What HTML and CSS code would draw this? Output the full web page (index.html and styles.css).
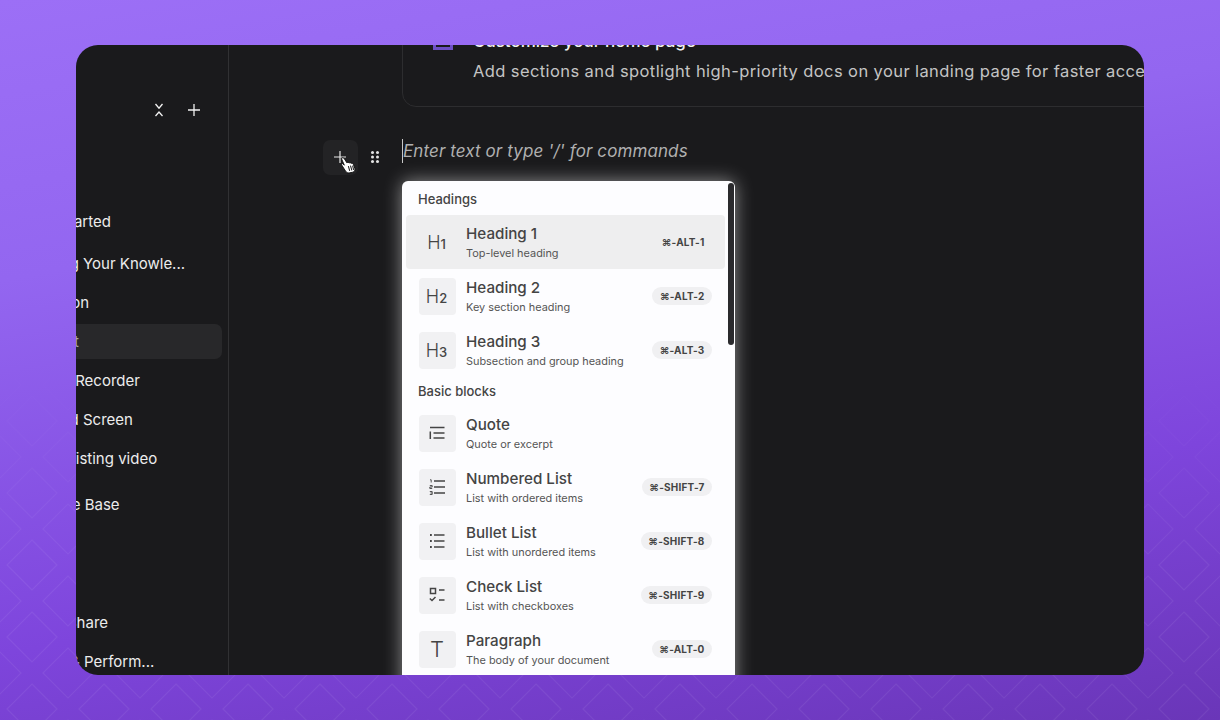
FILE: index.html

```html
<!DOCTYPE html>
<html lang="en">
<head>
  <meta charset="UTF-8" />
  <title>Docs editor</title>
  <link rel="stylesheet" href="styles.css">
</head>
<body>
  <svg class="pattern" width="1220" height="720" aria-hidden="true">
    <defs>
      <pattern id="diamonds" width="72" height="72" patternUnits="userSpaceOnUse" x="-4" y="25">
        <path d="M36 11 61 36 36 61 11 36Z M-25 0 0-25 25 0 0 25Z M47 0 72-25 97 0 72 25Z M-25 72 0 47 25 72 0 97Z M47 72 72 47 97 72 72 97Z" fill="none" stroke="#fff" stroke-width="1.200"/>
      </pattern>
    </defs>
    <rect width="1220" height="720" fill="url(#diamonds)"/>
  </svg>

  <div class="window">
    <aside class="sidebar">
      <div class="side-tools">
        <svg width="16" height="16" viewBox="0 0 16 16"><path d="M4.500 2 8 6.200 11.500 2M4.500 14 8 10 11.500 14" fill="none" stroke="#f2f2f2" stroke-width="1.300"/></svg>
        <svg width="16" height="16" viewBox="0 0 16 16"><path d="M8 2v12M2 8h12" fill="none" stroke="#f2f2f2" stroke-width="1.300"/></svg>
      </div>
      <nav class="nav">
        <div class="nav-item in-started">Getting Started</div>
        <div class="nav-item in-building tall">Building Your Knowle...</div>
        <div class="nav-item in-intro">Introduction</div>
        <div class="nav-item in-doc active">Document</div>
        <div class="nav-item in-recorder">Screen Recorder</div>
        <div class="nav-item in-screen">Upload Screen</div>
        <div class="nav-item in-video">From existing video</div>
        <div class="nav-item in-base group">Knowledge Base</div>
        <div class="nav-item in-share far">Share</div>
        <div class="nav-item in-perform">Analytics &amp; Perform...</div>
      </nav>
    </aside>

    <main class="content">
      <section class="card">
        <div class="card-mark"></div>
        <div class="card-text">
          <div class="card-title">Customize your home page</div>
          <div class="card-desc">Add sections and spotlight high-priority docs on your landing page for faster access</div>
        </div>
      </section>

      <div class="editor-line">
        <div class="block-tools">
          <div class="add-btn">
            <svg class="plus" width="14" height="14" viewBox="0 0 14 14"><path d="M7 1v12M1 7h12" fill="none" stroke="#e8e8e8" stroke-width="1.200"/></svg>
            <svg class="hand" width="17" height="18" viewBox="0 0 16 17"><path d="M2.300 2.500C3 1.300 4.300 1.400 5 2.600L7.500 6.500C8 5.800 9 5.900 9.500 6.700 10 6 11 6.200 11.500 7 12 6.600 13 6.800 13.500 7.800L15 12C15.300 13.500 14.500 15 13 15.300L9.500 16C8 16.200 7 15.500 6.200 14.300L2.500 8.500C2 7.600 2.800 7 3.600 7.300L5 8.700Z" fill="#fff" stroke="#111" stroke-width=".9"/><path d="M8.800 9.500l1.300 4.500M10.800 9l1.300 4.500M12.800 9l1 4" stroke="#222" stroke-width="1"/></svg>
          </div>
          <svg class="grip" width="10" height="14" viewBox="0 0 10 14" fill="#e4e4e4"><circle cx="2.500" cy="2.500" r="1.500"/><circle cx="7.500" cy="2.500" r="1.500"/><circle cx="2.500" cy="7" r="1.500"/><circle cx="7.500" cy="7" r="1.500"/><circle cx="2.500" cy="11.500" r="1.500"/><circle cx="7.500" cy="11.500" r="1.500"/></svg>
        </div>
        <div class="placeholder">Enter text or type '/' for commands</div>
      </div>

      <div class="menu">
        <div class="scroll-thumb"></div>
        <div class="menu-label">Headings</div>
        <div class="menu-row current">
          <div class="menu-icon"><span class="h-big">H</span><span class="h-num">1</span></div>
          <div class="menu-text"><div class="menu-title">Heading 1</div><div class="menu-sub">Top-level heading</div></div>
          <span class="key">⌘-ALT-1</span>
        </div>
        <div class="menu-row">
          <div class="menu-icon"><span class="h-big">H</span><span class="h-num">2</span></div>
          <div class="menu-text"><div class="menu-title">Heading 2</div><div class="menu-sub">Key section heading</div></div>
          <span class="key">⌘-ALT-2</span>
        </div>
        <div class="menu-row">
          <div class="menu-icon"><span class="h-big">H</span><span class="h-num">3</span></div>
          <div class="menu-text"><div class="menu-title">Heading 3</div><div class="menu-sub">Subsection and group heading</div></div>
          <span class="key">⌘-ALT-3</span>
        </div>
        <div class="menu-label second">Basic blocks</div>
        <div class="menu-row">
          <div class="menu-icon">
            <svg width="18" height="18" viewBox="0 0 18 18" fill="none" stroke="#444" stroke-width="1.500"><path d="M2 3.500h14.500M5.500 9h11M5.500 14h11M2.300 7.500v7.500"/></svg>
          </div>
          <div class="menu-text"><div class="menu-title">Quote</div><div class="menu-sub">Quote or excerpt</div></div>
        </div>
        <div class="menu-row">
          <div class="menu-icon">
            <svg width="18" height="18" viewBox="0 0 18 18" fill="none" stroke="#444" stroke-width="1.500"><path d="M6 3h11M6 9h11M6 15h11"/><path d="M2 1.800h1.200v2.700M1.800 7.500h2.400V9H1.800v1.500h2.400M1.800 13.500h2.400v3H1.800M2.400 15h1.800" stroke-width=".9"/></svg>
          </div>
          <div class="menu-text"><div class="menu-title">Numbered List</div><div class="menu-sub">List with ordered items</div></div>
          <span class="key">⌘-SHIFT-7</span>
        </div>
        <div class="menu-row">
          <div class="menu-icon">
            <svg width="18" height="18" viewBox="0 0 18 18" fill="none" stroke="#444" stroke-width="1.500"><path d="M6 3h10.500M6 9h10.500M6 15h10.500"/><path d="M2 3h1.800M2 9h1.800M2 15h1.800" stroke-width="1.800"/></svg>
          </div>
          <div class="menu-text"><div class="menu-title">Bullet List</div><div class="menu-sub">List with unordered items</div></div>
          <span class="key">⌘-SHIFT-8</span>
        </div>
        <div class="menu-row">
          <div class="menu-icon">
            <svg width="18" height="18" viewBox="0 0 18 18" fill="none" stroke="#444" stroke-width="1.500"><rect x="2.500" y="2.500" width="5" height="5"/><path d="M11 4h5.500M11 14h5.500M1.800 12.500l2.200 2 3.500-3.500"/></svg>
          </div>
          <div class="menu-text"><div class="menu-title">Check List</div><div class="menu-sub">List with checkboxes</div></div>
          <span class="key">⌘-SHIFT-9</span>
        </div>
        <div class="menu-row">
          <div class="menu-icon"><span class="t-big">T</span></div>
          <div class="menu-text"><div class="menu-title">Paragraph</div><div class="menu-sub">The body of your document</div></div>
          <span class="key">⌘-ALT-0</span>
        </div>
      </div>
    </main>
  </div>
</body>
</html>
```

FILE: styles.css

```css
* {
  box-sizing: border-box;
}

body {
  margin: 0;
  width: 1220px;
  height: 720px;
  padding: 45px 76px;
  overflow: hidden;
  position: relative;
  font-family: Inter, "Liberation Sans", sans-serif;
  background: linear-gradient(170deg, #9c6ff6 0%, #9366f0 30%, #7e45dc 70%, #6a36b8 100%);
}

.pattern {
  position: absolute;
  left: 0;
  top: 0;
  opacity: 0.06;
  -webkit-mask-image: linear-gradient(to bottom, transparent 50%, #000 80%);
  mask-image: linear-gradient(to bottom, transparent 50%, #000 80%);
}

.window {
  position: relative;
  width: 1068px;
  height: 630px;
  display: flex;
  border-radius: 22px;
  overflow: hidden;
  background: #1a1a1c;
}

/* sidebar, scrolled sideways so labels get cut at the left */
.sidebar {
  width: 153px;
  flex-shrink: 0;
  border-right: 1px solid #313133;
  overflow: hidden;
}

.side-tools {
  display: flex;
  justify-content: flex-end;
  gap: 19px;
  padding: 57px 26px 0 0;
  height: 157px;
}

.nav {
  margin-left: -76px;
  font-size: 15px;
  color: #ececec;
}

.nav-item {
  height: 39.300px;
  line-height: 39.300px;
  white-space: nowrap;
}

.nav-item.tall {
  margin-top: 2.500px;
}

.nav-item.group {
  margin-top: 6.500px;
}

.nav-item.far {
  margin-top: 78px;
}

.nav-item.active {
  margin-right: 6px;
  height: 35px;
  line-height: 35px;
  margin-top: 2px;
  margin-bottom: 1.500px;
  background: #28282a;
  border-radius: 7px;
  color: #a8a8a8;
}

.in-started { padding-left: 4px; }
.in-building { padding-left: 22px; }
.in-intro { padding-left: 4px; }
.in-doc { padding-left: 6px; }
.in-recorder { padding-left: 21px; }
.in-screen { padding-left: 28px; }
.in-video { padding-left: 19px; }
.in-base { padding-left: 1px; }
.in-share { padding-left: 67px; }
.in-perform { padding-left: 1px; }

/* main */
.content {
  flex: 1;
  min-width: 0;
  position: relative;
  overflow: hidden;
}

.card {
  margin: -40px -40px 0 173px;
  height: 102px;
  border: 1px solid #2d2d2f;
  border-radius: 14px;
  display: flex;
  gap: 20px;
  padding: 23px 0 0 30px;
  color: #c4c4c4;
}

.card-mark {
  width: 20px;
  height: 20px;
  margin-top: 1px;
  flex-shrink: 0;
  border: 3px solid #6d4fc4;
}

.card-title {
  font-size: 17px;
  font-weight: 500;
  color: #f0f0f0;
  line-height: 24px;
}

.card-desc {
  font-size: 16.500px;
  line-height: 24px;
  margin-top: 6px;
  white-space: nowrap;
  letter-spacing: 0.4px;
}

.editor-line {
  display: flex;
  align-items: flex-start;
  margin: 33px 0 0 94px;
  position: relative;
}

.block-tools {
  display: flex;
  align-items: center;
  gap: 10px;
  width: 79px;
}

.add-btn {
  width: 35px;
  height: 35px;
  background: #232325;
  border-radius: 7px;
  position: relative;
}

.plus {
  position: absolute;
  left: 10px;
  top: 10px;
}

.hand {
  position: absolute;
  left: 16px;
  top: 16px;
}

.grip {
  margin: -2px 0 0 2px;
}

.placeholder {
  font-size: 17px;
  font-style: italic;
  line-height: 24px;
  color: #b0b0b0;
  border-left: 1px solid #c8c8c8;
  white-space: nowrap;
  letter-spacing: 0.1px;
  margin-top: -1px;
}

.menu {
  position: absolute;
  left: 173px;
  top: 136px;
  width: 333px;
  height: 520px;
  background: #fdfdff;
  border-radius: 6px;
  padding: 6px 4px;
  box-shadow: 0 0 18px rgba(255, 255, 255, 0.5);
  color: #444;
}

.scroll-thumb {
  position: absolute;
  right: 1px;
  top: 2px;
  width: 6px;
  height: 162px;
  border-radius: 3px;
  background: #2a2a2d;
}

.menu-label {
  font-size: 13px;
  font-weight: 500;
  height: 28px;
  line-height: 24px;
  padding-left: 12px;
}

.menu-label.second {
  height: 29px;
  line-height: 28px;
}

.menu-row {
  width: 319px;
  height: 54px;
  display: flex;
  align-items: center;
  padding: 0 13px;
  border-radius: 4px;
}

.menu-row.current {
  background: #eeeeef;
}

.menu-icon {
  width: 37px;
  height: 37px;
  flex-shrink: 0;
  margin-right: 10px;
  background: #f1f1f3;
  border-radius: 4px;
  display: flex;
  align-items: center;
  justify-content: center;
}

.menu-icon svg {
  margin-left: -2px;
}

.current .menu-icon,
.current .key {
  background: transparent;
}

.h-big {
  font-size: 18px;
  font-weight: 300;
  margin-left: -2px;
}

.h-num {
  font-size: 13px;
  font-weight: 500;
  margin-top: 3px;
}

.t-big {
  font-size: 22px;
  font-weight: 300;
  margin-left: -1px;
}

.menu-text {
  flex: 1;
  min-width: 0;
  margin-top: -1px;
}

.menu-title {
  font-size: 15.200px;
  font-weight: 500;
  line-height: 21px;
}

.menu-sub {
  font-size: 10.900px;
  line-height: 16px;
  color: #555;
  margin-top: 1px;
  white-space: nowrap;
}

.key {
  font-size: 10px;
  font-weight: 700;
  letter-spacing: 0.2px;
  line-height: 18px;
  padding: 0 7.500px;
  border-radius: 9px;
  background: #f0f0f2;
  white-space: nowrap;
  color: #444;
}
```
